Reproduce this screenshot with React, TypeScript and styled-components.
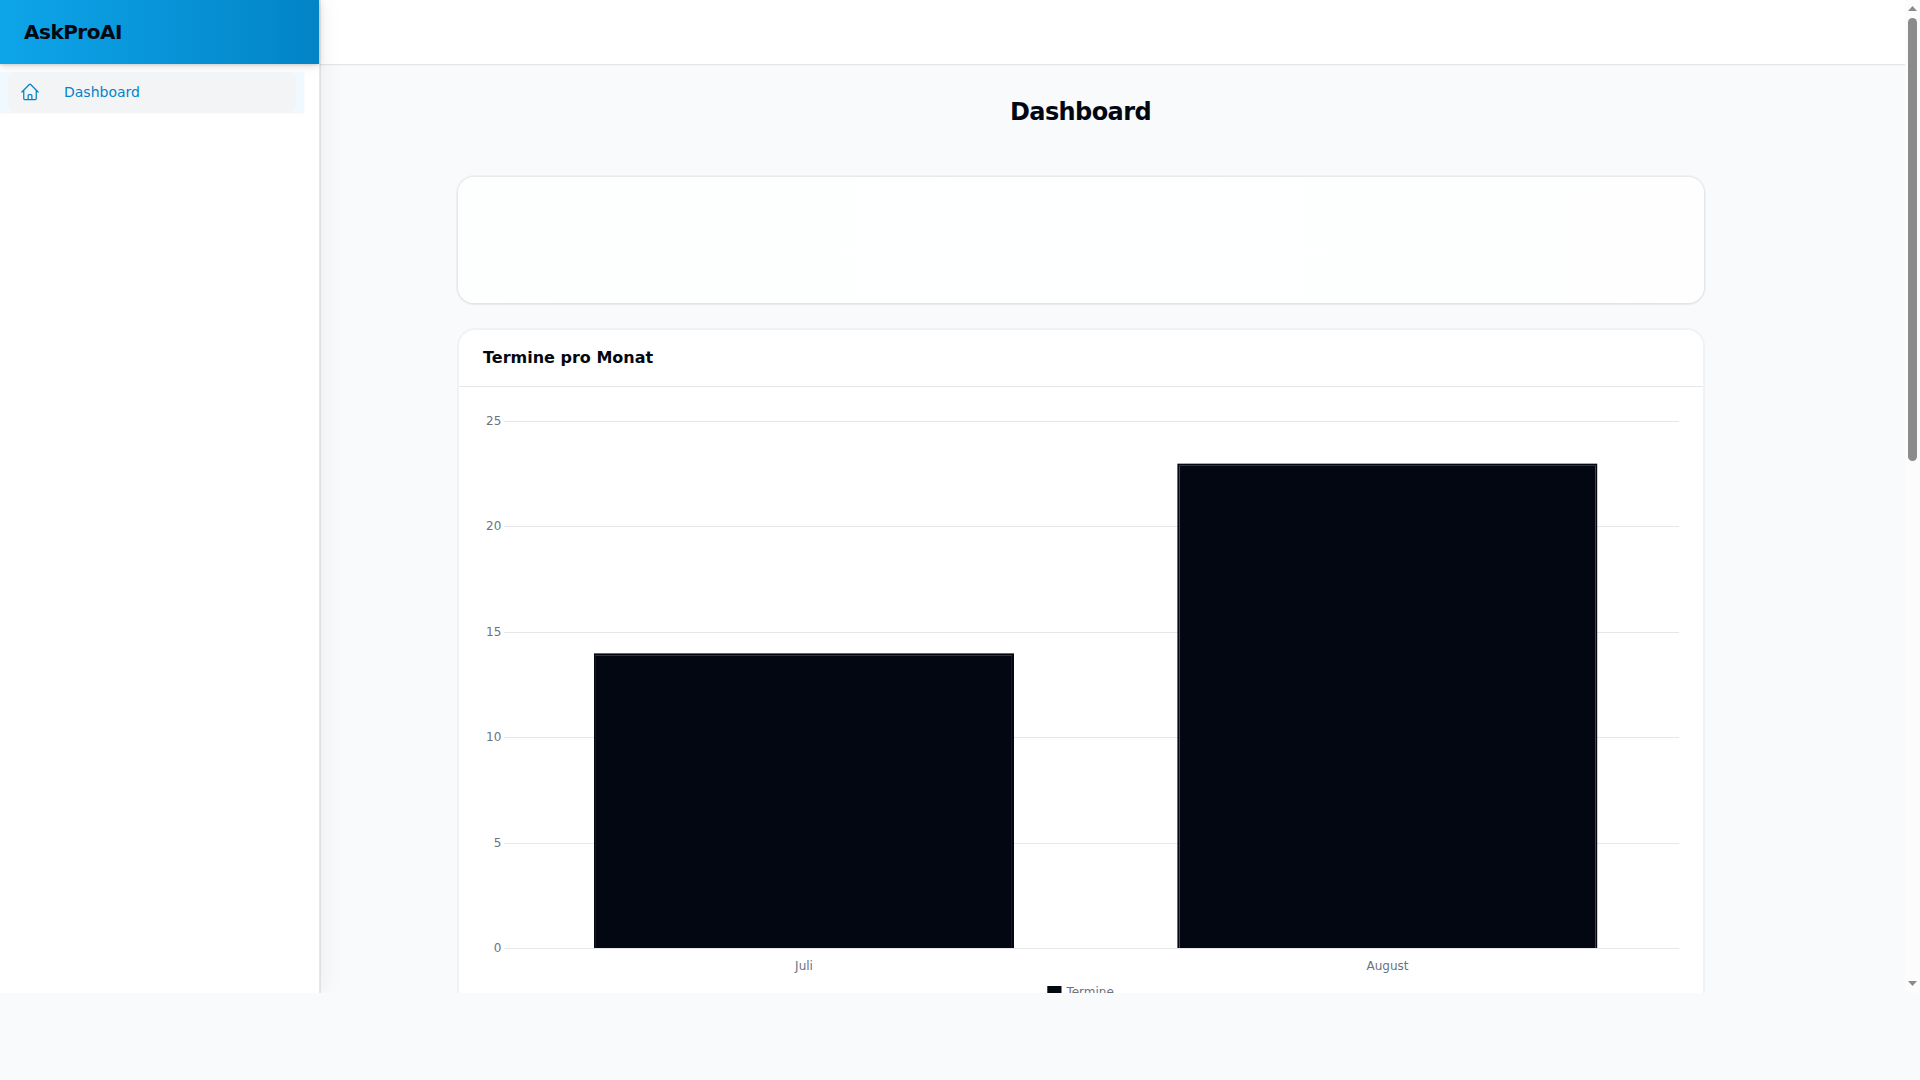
import React from 'react';
import styled, { createGlobalStyle } from 'styled-components';

const GlobalStyle = createGlobalStyle`
  *, *::before, *::after { box-sizing: border-box; }
  html, body { margin: 0; padding: 0; background: #f9fafc; overflow: hidden; }
  body { font-family: "DejaVu Sans", sans-serif; color: #030712; }
`;

const Shell = styled.div`
  display: flex;
  width: 1920px;
  height: 993px;
  margin-bottom: 87px;
  overflow: hidden;
`;

const Sidebar = styled.aside`
  position: relative;
  z-index: 2;
  flex: 0 0 320px;
  background: #fff;
  border-right: 1px solid #e5e7eb;
  box-shadow: 0 0 0 1px rgba(3, 7, 18, 0.07), 4px 0 20px rgba(0, 0, 0, 0.05);
`;

const Brand = styled.header`
  display: flex;
  align-items: center;
  height: 64px;
  padding: 0 24px;
  background: linear-gradient(90deg, #0ea5e9 0%, #0284c7 100%);
  box-shadow: 0 2px 8px rgba(0, 0, 0, 0.15), 0 1px 2px rgba(0, 0, 0, 0.1);
  font-size: 20px;
  font-weight: 700;
  line-height: 28px;
  letter-spacing: -0.5px;
`;

const NavItem = styled.div`
  width: 304px;
  height: 40px;
  margin-top: 8px;
  padding: 0 8px;
  background: #f0f9ff;
  box-shadow: 0 1px 2px rgba(0, 0, 0, 0.06);
`;

const NavLink = styled.a`
  display: flex;
  align-items: center;
  gap: 24px;
  height: 40px;
  padding: 0 12px;
  border-radius: 8px;
  background: #f3f4f6;
  color: #0284c7;
  font-size: 14px;
  line-height: 20px;
`;

const Page = styled.div`
  display: flex;
  flex: 1;
  flex-direction: column;
  min-width: 0;
`;

const Topbar = styled.div`
  flex: 0 0 64px;
  background: #fff;
  box-shadow: 0 0 0 1px rgba(3, 7, 18, 0.05), 0 1px 2px rgba(0, 0, 0, 0.05);
`;

const Main = styled.main`
  display: flex;
  flex-direction: column;
  align-items: center;
  padding: 32px 200px 0 137px;
`;

const Title = styled.h1`
  margin: 0 1px 0 0;
  height: 81px;
  font-size: 24px;
  font-weight: 700;
  line-height: 32px;
  letter-spacing: -0.6px;
`;

const StatsCard = styled.section`
  width: 1246px;
  height: 126px;
  margin-bottom: 27px;
  border-radius: 16px;
  background: linear-gradient(90deg, #fdfffe, #fefefe);
  box-shadow: 0 0 0 1px rgba(3, 7, 18, 0.025), 0 0 0 2px rgba(3, 7, 18, 0.03), 0 1px 2px 1px rgba(0, 0, 0, 0.04);
`;

const ChartCard = styled.section`
  width: 1244px;
  height: 760px;
  border-radius: 16px 16px 0 0;
  background: #fff;
  box-shadow: 0 0 0 2px rgba(3, 7, 18, 0.032);
`;

const CardHeader = styled.h2`
  margin: 0;
  height: 57px;
  padding: 16px 24px;
  font-size: 16px;
  font-weight: 600;
  line-height: 24px;
  background: linear-gradient(#e5e7eb, #e5e7eb) 0 100% / 100% 1px no-repeat;
`;

const Chart = styled.svg`
  display: block;
  font-family: "DejaVu Sans", sans-serif;
  font-size: 12px;
  fill: #6b7280;
`;

const Scrollbar = styled.div`
  display: flex;
  flex: 0 0 15px;
  flex-direction: column;
  align-items: center;
  background: #fcfcfc;
`;

const Thumb = styled.div`
  width: 9px;
  height: 443px;
  margin-bottom: auto;
  border-radius: 5px;
  background: #8b8b8b;
`;

const Arrow = styled.svg`
  display: block;
  flex: none;
  fill: #8b8b8b;
`;

const ticks = [25, 20, 15, 10, 5, 0];
const bars = [
  { label: 'Juli', value: 14, x: 135, width: 420, left: 136.5, right: 552.5, side: '#121723', center: 345 },
  { label: 'August', value: 23, x: 718.4, width: 419.8, left: 720.5, right: 1136.5, side: '#40444e', center: 928.5 },
];
const base = 561.5;
const unit = 21.08;

function HomeIcon() {
  return (
    <svg width="20" height="20" viewBox="0 0 24 24" fill="none" stroke="#0284c7" strokeWidth="1.5" strokeLinecap="round" strokeLinejoin="round">
      <path d="m2.25 12 8.954-8.955c.44-.439 1.152-.439 1.591 0L21.75 12M4.5 9.75v10.125c0 .621.504 1.125 1.125 1.125H9.75v-4.875c0-.621.504-1.125 1.125-1.125h2.25c.621 0 1.125.504 1.125 1.125V21h4.125c.621 0 1.125-.504 1.125-1.125V9.75M8.25 21h8.25" />
    </svg>
  );
}

export default function App() {
  return (
    <>
      <GlobalStyle />
      <Shell>
        <Sidebar>
          <Brand>AskProAI</Brand>
          <NavItem>
            <NavLink>
              <HomeIcon />
              Dashboard
            </NavLink>
          </NavItem>
        </Sidebar>
        <Page>
          <Topbar />
          <Main>
            <Title>Dashboard</Title>
            <StatsCard />
            <ChartCard>
              <CardHeader>Termine pro Monat</CardHeader>
              <Chart width="1244" height="640" viewBox="0 0 1244 640">
                {ticks.map((t) => {
                  const y = Math.round(base - t * unit - 0.5) + 0.5;
                  return (
                    <g key={t}>
                      <path d={`M45 ${y}H1220`} stroke="#e5e7eb" />
                      <text x="42.3" y={y + 3} textAnchor="end">{t}</text>
                    </g>
                  );
                })}
                {bars.map((b) => {
                  const top = base - b.value * unit;
                  const line = Math.floor(top) + 2.5;
                  return (
                    <g key={b.label}>
                      <rect x={b.x} y={top} width={b.width} height={561 - top} fill="#030712" />
                      <path d={`M${b.left} 561V${line}M${b.right} 561V${line}`} stroke={b.side} />
                      <path d={`M${b.left - 0.5} ${line}H${b.right + 0.5}`} stroke="#30343f" />
                      <text x={b.center} y="583" textAnchor="middle">{b.label}</text>
                    </g>
                  );
                })}
                <rect x="588.3" y="599" width="14.2" height="12" fill="#030712" />
                <text x="607.4" y="609" textAnchor="start">Termine</text>
              </Chart>
            </ChartCard>
          </Main>
        </Page>
        <Scrollbar>
          <Arrow width="15" height="18" viewBox="0 0 15 18"><path d="M3 11L7.5 6L12 11Z" /></Arrow>
          <Thumb />
          <Arrow width="15" height="15" viewBox="0 0 15 15"><path d="M3 3L7.5 8L12 3Z" /></Arrow>
        </Scrollbar>
      </Shell>
    </>
  );
}
